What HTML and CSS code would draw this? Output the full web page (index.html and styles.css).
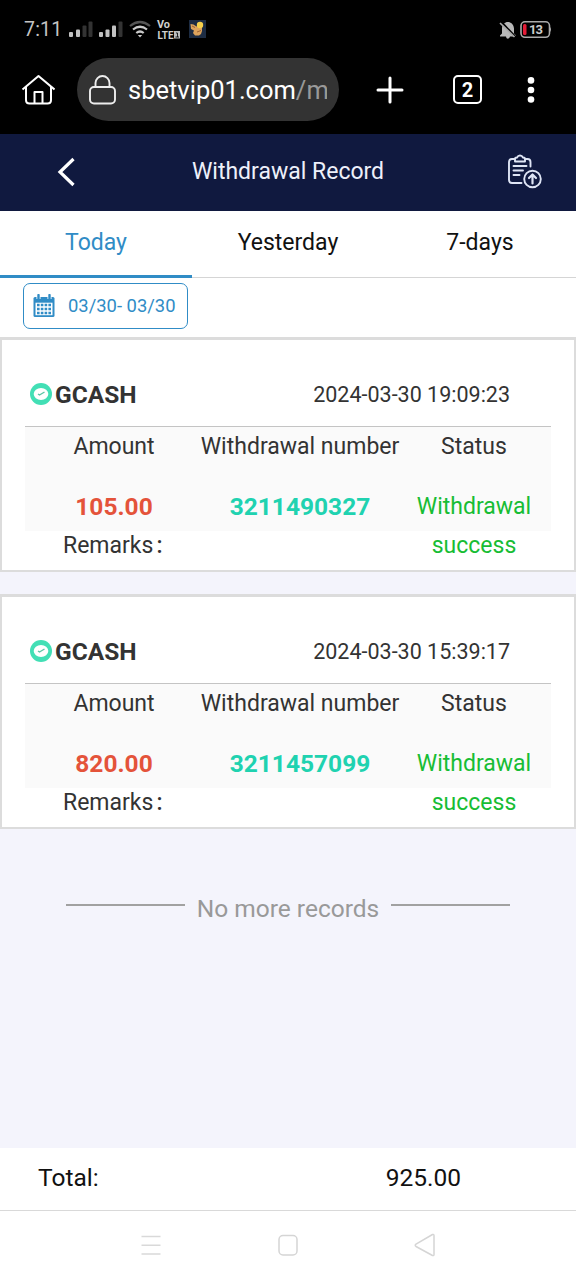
FILE: index.html
```html
<!DOCTYPE html>
<html lang="en">
<head>
<meta charset="utf-8">
<title>Withdrawal Record</title>
<link rel="stylesheet" href="styles.css">
</head>
<body>
<div class="screen">
  <div class="status-bar">
    <span class="clock">7:11</span>
    <svg class="indicators" width="140" height="24" viewBox="66 18 140 24">
      <g fill="#c2c2c2"><rect x="69" y="32" width="4" height="5" rx="1"/><rect x="76" y="29.500" width="4" height="7.500" rx="1"/><rect x="99" y="32" width="4" height="5" rx="1"/><rect x="105.500" y="29.500" width="4" height="7.500" rx="1"/><rect x="112" y="25.500" width="4" height="11.500" rx="1"/></g>
      <g fill="#333"><rect x="82.500" y="25.500" width="4" height="11.500" rx="1"/><rect x="88.500" y="21.500" width="4" height="15.500" rx="1"/><rect x="118.500" y="21.500" width="4" height="15.500" rx="1"/></g>
      <g fill="none" stroke-width="2.200"><path d="M130 26q10-8 20 0" stroke="#555"/><path d="M133 29.500q7-5.500 14 0M136.300 33q3.700-3 7.400 0" stroke="#cacaca"/></g>
      <path d="M137.800 35h4.400l-2.200 2.500z" fill="#cacaca"/>
      <g class="volte"><text x="157" y="28" textLength="13" lengthAdjust="spacingAndGlyphs">Vo</text><text x="157.500" y="38.500" textLength="16" lengthAdjust="spacingAndGlyphs">LTE</text></g>
      <rect x="174" y="31" width="6" height="7.500" fill="#bbb"/><path d="M176 33h1.500v4M175.500 37h3.500" fill="none" stroke="#111" stroke-width=".9"/>
      <rect x="189" y="20" width="17" height="18" fill="#1d2c43"/>
      <path d="M190.500 24l3 .5 3 2 2-1.500h3.500v6l-1 3-2 1.500h-4l-2-2.500 1-2.500-3-1.500z" fill="#dda35c"/><circle cx="200" cy="25" r="3.200" fill="#f5cf4b"/><path d="M192 26l3 1.500M197 32l4-1.500" stroke="#8a512b" stroke-width=".8"/>
    </svg>
    <svg class="battery" width="56" height="22" viewBox="497 18 56 22">
      <path d="M500 34.500l2-2v-5c0-8 11-9 12 0v5l2 2v1h-6c-1 3-3.500 3-4 0h-6z" fill="#b8b8b8"/><path d="M501 20.500l15 16" stroke="#000" stroke-width="2"/><path d="M500 22l14.500 14" stroke="#aaa" stroke-width="1.700"/>
      <rect x="521" y="20.800" width="28.500" height="15.500" rx="4" fill="none" stroke="#aaa" stroke-width="1.600"/><path d="M550 26q2 2.500 0 5z" fill="#aaa"/><rect x="523" y="23" width="3.500" height="11" rx="1.500" fill="#e31b36"/>
      <text class="charge" x="529" y="33" textLength="14">13</text>
    </svg>
  </div>

  <div class="browser-bar">
    <svg class="home" width="34" height="32" viewBox="21 73 34 32"><path d="M22.500 89.500L38.500 76l16 13.500M26 87v13q0 3.500 3.500 3.500h18q3.500 0 3.500-3.500V87M34.500 103V92h8v11" fill="none" stroke="#fff" stroke-width="2" stroke-linejoin="round"/></svg>
    <div class="address">
      <svg width="28" height="32" viewBox="88 74 28 32"><rect x="90" y="87" width="25" height="16.500" rx="4" fill="none" stroke="#eee" stroke-width="1.900"/><path d="M95.500 87v-4a7 7 0 0 1 14 0v4" fill="none" stroke="#eee" stroke-width="1.900"/></svg>
      <span class="url">sbetvip01.com<span class="path">/m</span></span>
    </div>
    <svg class="plus" width="28" height="28" viewBox="0 0 28 28"><path d="M14 2v24M2 14h24" stroke="#fff" stroke-width="3" stroke-linecap="round"/></svg>
    <div class="tab-count">2</div>
    <svg class="more" width="8" height="28" viewBox="0 0 8 28"><g fill="#fff"><circle cx="4" cy="4.400" r="3.300"/><circle cx="4" cy="14" r="3.300"/><circle cx="4" cy="23.500" r="3.300"/></g></svg>
  </div>

  <header class="page-header">
    <svg class="back" width="20" height="32" viewBox="0 0 20 32"><path d="M18.500 3L5 16l13.500 13" fill="none" stroke="#fff" stroke-width="3.200"/></svg>
    <h1>Withdrawal Record</h1>
    <svg class="export" width="36" height="36" viewBox="507 151 36 36"><g fill="none" stroke="#dfe5f5" stroke-width="1.900" stroke-linecap="round" stroke-linejoin="round"><path d="M514 157h-2q-3 0-3 3v18q0 3 3 3h9.500M526 157h1.500q3 0 3 3v4.500M515 159.500v-2.500q0-1.500 2-1.500 1-2 3-2t3 2q2 0 2 1.500v2.500zM513.500 164h13M513.500 168.500h9.500M513.500 173h6"/><circle cx="532.500" cy="177" r="8.300"/><path d="M532.500 181.500v-9M529 176l3.500-3.500 3.500 3.500" stroke-width="2.200"/></g></svg>
  </header>

  <nav class="tabs">
    <div class="tab active">Today</div><div class="tab">Yesterday</div><div class="tab">7-days</div>
  </nav>

  <div class="filter">
    <div class="date-range">
      <svg width="22" height="24" viewBox="0 0 22 24"><path d="M2 3h18q1.500 0 1.500 1.500v17q0 1.500-1.500 1.500H2Q.5 23 .5 21.500v-17Q.5 3 2 3z" fill="#308cc6"/><path d="M2.500 8.700h17v12.500h-17z" fill="#fff"/><path d="M5.500 0v5M16.500 0v5" stroke="#fff" stroke-width="4"/><path d="M5.500 1v4M16.500 1v4" stroke="#308cc6" stroke-width="2.400" stroke-linecap="round"/><path d="M4 11h14M4 15h14M4 19h14" stroke="#308cc6" stroke-width="2.500" stroke-dasharray="2.600 1.200"/></svg>
      <span>03/30- 03/30</span>
    </div>
  </div>

  <main class="records">
    <section class="card">
      <div class="card-head">
        <svg width="24" height="24" viewBox="0 0 24 24"><circle cx="12" cy="12" r="11" fill="#42dfb5"/><ellipse cx="12" cy="12" rx="7.300" ry="6" fill="#fff"/><path d="M9 12l1.500 1 5-3" fill="none" stroke="#5dc5a6" stroke-width="1.400"/></svg>
        <strong>GCASH</strong><time>2024-03-30 19:09:23</time>
      </div>
      <div class="grid">
        <span>Amount</span><span>Withdrawal number</span><span>Status</span>
        <b class="amount">105.00</b><b class="number">3211490327</b><span class="state">Withdrawal success</span>
      </div>
      <div class="remarks">Remarks<span class="colon">:</span></div>
    </section>
    <section class="card">
      <div class="card-head">
        <svg width="24" height="24" viewBox="0 0 24 24"><circle cx="12" cy="12" r="11" fill="#42dfb5"/><ellipse cx="12" cy="12" rx="7.300" ry="6" fill="#fff"/><path d="M9 12l1.500 1 5-3" fill="none" stroke="#5dc5a6" stroke-width="1.400"/></svg>
        <strong>GCASH</strong><time>2024-03-30 15:39:17</time>
      </div>
      <div class="grid">
        <span>Amount</span><span>Withdrawal number</span><span>Status</span>
        <b class="amount">820.00</b><b class="number">3211457099</b><span class="state">Withdrawal success</span>
      </div>
      <div class="remarks">Remarks<span class="colon">:</span></div>
    </section>
    <div class="end"><i></i><span>No more records</span><i></i></div>
  </main>

  <footer class="total"><span>Total:</span><span class="sum">925.00</span></footer>
  <div class="system-nav">
    <svg width="22" height="24" viewBox="0 0 22 24"><path d="M1.500 3.500h19M1.500 12.300h19M1.500 21h19" stroke="#d9d9d9" stroke-width="1.500"/></svg>
    <svg width="22" height="24" viewBox="0 0 22 24"><rect x="2" y="2.500" width="18" height="19.500" rx="4" fill="none" stroke="#d5d5d5" stroke-width="1.500"/></svg>
    <svg width="22" height="24" viewBox="0 0 22 24"><path d="M18.500 1.500q1.500-.5 1.500 1v19q0 1.500-1.500 1L2 13.500q-1.500-1.200 0-2.400z" fill="none" stroke="#d5d5d5" stroke-width="1.500" stroke-linejoin="round"/></svg>
  </div>
</div>
</body>
</html>
```
FILE: styles.css
```css
* { box-sizing: border-box; }
body { margin: 0; font-family: Roboto, "Liberation Sans", sans-serif; color: #333; }
svg { display: block; flex: none; }
.screen { width: 576px; height: 1280px; display: flex; flex-direction: column; background: #f4f4fc; overflow: hidden; }
.screen > * { flex: none; }

.status-bar { height: 58px; background: #000; display: flex; align-items: center; padding: 1px 23px 0 24px; }
.clock { width: 42px; font-size: 19.500px; color: #c4c4c4; letter-spacing: .2px; }
.battery { margin-left: auto; }
.volte { font-size: 10px; font-weight: 700; fill: #d0d0d0; }
.charge { font-size: 13px; font-weight: 700; fill: #ccc; }

.browser-bar { height: 76px; background: #000; display: flex; align-items: flex-start; padding: 0 0 0 21px; }
.home { margin-top: 15px; }
.address { margin-left: 22px; width: 262px; height: 63px; border-radius: 32px; background: #333; display: flex; align-items: center; padding: 0 11px; gap: 12px; }
.url { width: 199px; overflow: hidden; white-space: nowrap; font-size: 25.500px; line-height: 36px; color: #fff; }
.path { color: #999; }
.plus { margin: 18px 0 0 37px; }
.tab-count { margin: 17px 0 0 49px; width: 29px; height: 29px; border: 2px solid #fff; border-radius: 5px; color: #fff; font-size: 20px; font-weight: 700; line-height: 26px; text-align: center; }
.more { margin: 18px 0 0 45px; }

.page-header { height: 77px; background: #10193f; display: grid; grid-template-columns: 1fr auto 1fr; align-items: center; padding: 0 33px 2px 55px; color: #edf0fa; }
.page-header h1 { margin: 0 22px 0 0; font-size: 23px; font-weight: 400; white-space: nowrap; }
.export { margin-top: -2px; justify-self: end; }

.tabs { height: 67px; display: flex; background: #fff; color: #111; font-size: 23px; line-height: 64px; text-align: center; box-shadow: inset 0 -1px #d5d5d5; }
.tab { flex: 1; }
.tab.active { color: #308cc6; border-bottom: 3px solid #308cc6; }

.filter { height: 59px; background: #fff; padding: 5px 23px; }
.date-range { width: 165px; height: 46px; border: 1.500px solid #308cc6; border-radius: 7px; display: flex; align-items: center; padding: 0 0 1px 9px; gap: 13px; color: #308cc6; font-size: 18.400px; white-space: nowrap; }

.records { flex: 1; display: flex; flex-direction: column; }
.card { height: 235px; margin-bottom: 22px; background: #fff; border: 2px solid #dcdcdc; border-top-width: 3px; padding: 0 23px; }
.card-head { height: 87px; display: flex; align-items: center; padding: 22px 41px 0 4px; border-bottom: 1px solid #c4c4c4; }
.card-head strong { margin-left: 2px; font-size: 24.500px; }
.card-head time { margin-left: auto; font-size: 21.500px; }
.grid { height: 104px; background: #fafafa; display: grid; grid-template-columns: 178px 194px 154px; grid-template-rows: 60px 44px; justify-items: center; font-size: 23px; line-height: 39px; white-space: nowrap; }
.grid .state { width: 120px; white-space: normal; text-align: center; color: #17bd34; }
.amount { color: #e4533a; font-size: 24.500px; }
.number { color: #20d2b0; font-size: 24.500px; }
.remarks { padding-left: 38px; font-size: 23px; line-height: 29px; }
.colon { margin-left: 3px; font-weight: 500; }
.end { display: flex; justify-content: center; align-items: center; gap: 12px; margin-top: 43px; color: #999; font-size: 24.500px; line-height: 30px; }
.end i { width: 119px; height: 2px; background: #a1a1a1; margin-bottom: 8px; }

.total { height: 63px; background: #fff; border-bottom: 1px solid #d9d9d9; display: flex; align-items: center; padding: 0 115px 3px 38px; justify-content: space-between; color: #111; font-size: 24.500px; }
.system-nav { height: 69px; background: #fff; display: flex; justify-content: space-between; align-items: center; padding: 0 140px 2px; }
```
